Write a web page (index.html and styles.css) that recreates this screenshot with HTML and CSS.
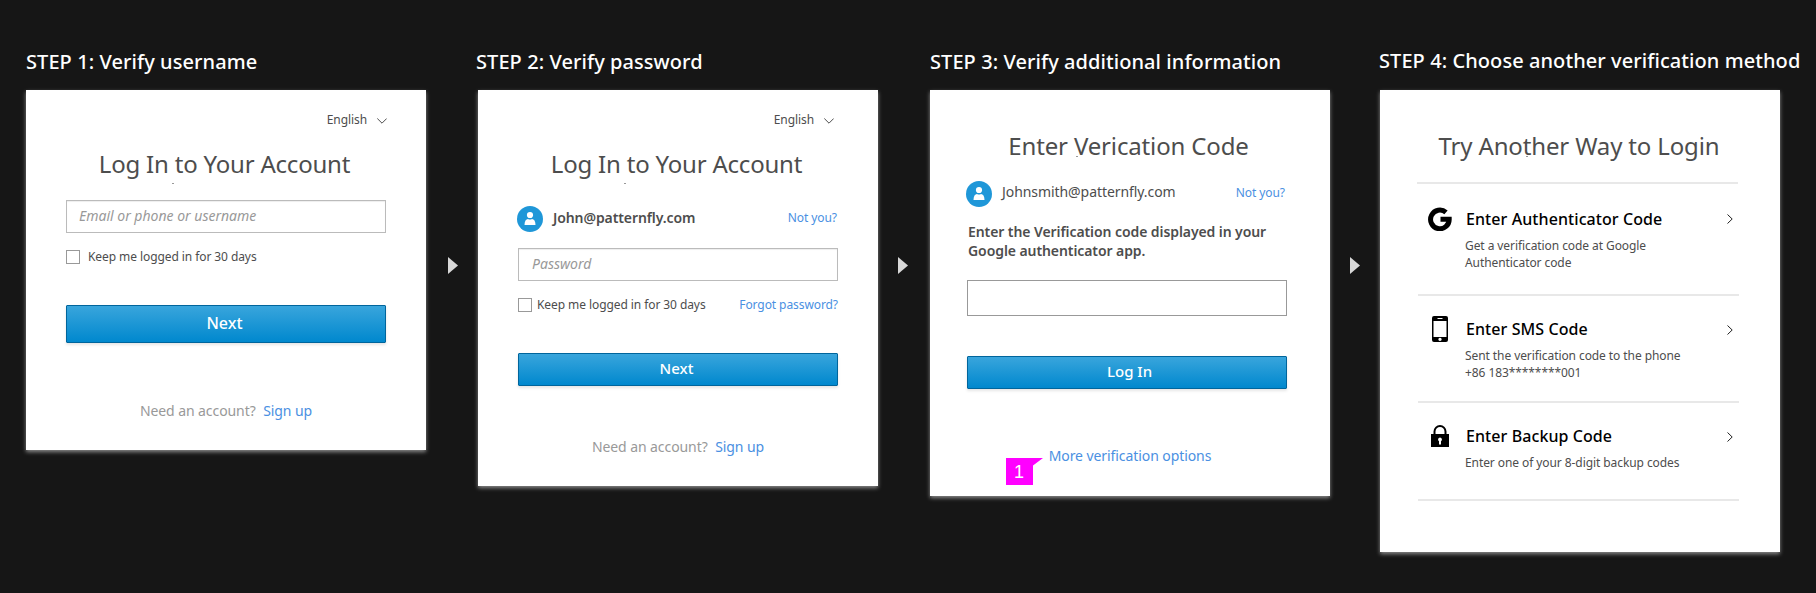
FILE: index.html
```
<!DOCTYPE html>
<html lang="en">
<head>
<meta charset="utf-8">
<title>Login flow</title>
<link rel="stylesheet" href="styles.css">
</head>
<body>
<main class="flow">
  <section class="step">
    <h2 class="step-title t1"><span>STEP 1: Verify username</span></h2>
    <div class="card card-1">
      <div class="language"><span>English</span><svg class="chevron-down" viewBox="0 0 10 6"><path d="M.3 .5 5 5.200 9.700 .5"/></svg></div>
      <h1 class="heading">Log In to Your Account</h1>
      <div class="field"><span>Email or phone or username</span></div>
      <div class="options"><i class="box"></i><span class="keep">Keep me logged in for 30 days</span></div>
      <div class="button">Next</div>
      <p class="footer">Need an account? <a class="signup">Sign up</a></p>
    </div>
  </section>
  <svg class="arrow" viewBox="0 0 10 17"><path d="M0 0 10 8.500 0 17z"/></svg>
  <section class="step">
    <h2 class="step-title t2"><span>STEP 2: Verify password</span></h2>
    <div class="card card-2">
      <div class="language"><span>English</span><svg class="chevron-down" viewBox="0 0 10 6"><path d="M.3 .5 5 5.200 9.700 .5"/></svg></div>
      <h1 class="heading">Log In to Your Account</h1>
      <div class="user">
        <svg class="avatar" viewBox="0 0 26 26"><circle class="disc" cx="13" cy="13" r="13"/><circle cx="13" cy="9" r="3.100"/><path d="M7.500 19c0-4 1.500-6 3.500-6q2 1 4 0c2 0 3.500 2 3.500 6z"/></svg>
        <span class="user-name">John@patternfly.com</span><a class="not-you">Not you?</a>
      </div>
      <div class="field"><span>Password</span></div>
      <div class="options"><i class="box"></i><span class="keep">Keep me logged in for 30 days</span><a class="forgot">Forgot password?</a></div>
      <div class="button">Next</div>
      <p class="footer">Need an account? <a class="signup">Sign up</a></p>
    </div>
  </section>
  <svg class="arrow" viewBox="0 0 10 17"><path d="M0 0 10 8.500 0 17z"/></svg>
  <section class="step">
    <h2 class="step-title t3"><span>STEP 3: Verify additional information</span></h2>
    <div class="card card-3">
      <h1 class="heading">Enter Verication Code</h1>
      <div class="user">
        <svg class="avatar" viewBox="0 0 26 26"><circle class="disc" cx="13" cy="13" r="13"/><circle cx="13" cy="9" r="3.100"/><path d="M7.500 19c0-4 1.500-6 3.500-6q2 1 4 0c2 0 3.500 2 3.500 6z"/></svg>
        <span class="user-name">Johnsmith@patternfly.com</span><a class="not-you">Not you?</a>
      </div>
      <p class="message">Enter the Verification code displayed in your<br>Google authenticator app.</p>
      <div class="field"></div>
      <div class="button">Log In</div>
      <p class="footer"><a>More verification options</a></p>
      <div class="marker"><svg viewBox="0 0 37 27"><path d="M0 0H37L27 7.500V27H0z"/></svg><span>1</span></div>
    </div>
  </section>
  <svg class="arrow" viewBox="0 0 10 17"><path d="M0 0 10 8.500 0 17z"/></svg>
  <section class="step">
    <h2 class="step-title t4"><span>STEP 4: Choose another verification method</span></h2>
    <div class="card card-4">
      <h1 class="heading">Try Another Way to Login</h1>
      <ul class="methods">
        <li class="method google">
          <div class="icon"><svg width="24" height="24" viewBox="0 0 24 24"><path class="g-arc" d="M18 5.400A9.300 9.300 0 1 0 21.200 12.300H12.500"/></svg></div>
          <div class="copy"><h3>Enter Authenticator Code</h3><p>Get a verification code at Google<br>Authenticator code</p></div>
          <svg class="chevron-right" viewBox="0 0 6 10"><path d="M.5 .5 5.200 5 .5 9.500"/></svg>
        </li>
        <li class="method sms">
          <div class="icon"><svg width="16" height="26" viewBox="0 0 16 26"><path fill-rule="evenodd" d="M2 0H14Q16 0 16 2V24Q16 26 14 26H2Q0 26 0 24V2Q0 0 2 0ZM1.500 5V21H14.500V5ZM5.500 2V3H10.500V2ZM8 21.800a1.600 1.600 0 1 0 .01 0z"/></svg></div>
          <div class="copy"><h3>Enter SMS Code</h3><p>Sent the verification code to the phone<br>+86 183********001</p></div>
          <svg class="chevron-right" viewBox="0 0 6 10"><path d="M.5 .5 5.200 5 .5 9.500"/></svg>
        </li>
        <li class="method backup">
          <div class="icon"><svg width="18" height="22" viewBox="0 0 18 22"><path class="shackle" d="M3.500 10V6.500a5.500 5.500 0 0 1 11 0V10"/><path fill-rule="evenodd" d="M0 9H18V22H0ZM9 12.500a2 2 0 0 0-1 3.700V19.500H10V16.200a2 2 0 0 0-1-3.700z"/></svg></div>
          <div class="copy"><h3>Enter Backup Code</h3><p>Enter one of your 8-digit backup codes</p></div>
          <svg class="chevron-right" viewBox="0 0 6 10"><path d="M.5 .5 5.200 5 .5 9.500"/></svg>
        </li>
      </ul>
    </div>
  </section>
</main>
</body>
</html>
```
FILE: styles.css
```
* { box-sizing: border-box; margin: 0; padding: 0; }
body {
  height: 593px;
  overflow: hidden;
  background: #161616;
  color: #4d4d4d;
  font-family: "Noto Sans", "Open Sans", sans-serif;
  font-size: 12px;
  line-height: 16px;
  letter-spacing: -.08px;
}
svg { display: block; flex: none; }
a { color: #4a90e2; }
.flow { display: flex; align-items: flex-start; padding: 47px 0 0 26px; }
.step { width: 400px; flex: none; }
.step-title {
  height: 30px;
  margin-bottom: 13px;
  color: #fff;
  font-size: 20px;
  font-weight: 500;
  line-height: 30px;
  letter-spacing: .07px;
  white-space: nowrap;
}
.t2 { margin-left: -2px; }
.t4 { margin: -1px 0 14px -1px; }
.arrow { width: 10px; height: 17px; margin: 210px 20px 0 22px; fill: #d8d8d8; }
.arrow:nth-of-type(2) { margin-left: 20px; margin-right: 22px; }
.arrow:nth-of-type(3) { margin-right: 20px; margin-left: 20px; }
.card {
  position: relative;
  padding: 22px 40px 0;
  background: #fff;
  box-shadow: 0 2px 4px rgba(255, 255, 255, .5);
}
.card-1 { height: 360px; }
.card-2 { height: 396px; }
.card-3 { height: 406px; padding: 40px 43px 0 37px; }
.card-4 { height: 462px; padding: 40px 42px 0 37px; }

.language { display: flex; justify-content: flex-end; align-items: center; gap: 10px; height: 16px; margin-right: -1px; }
.card-2 .language { margin-right: 4px; }
.chevron-down { width: 10px; height: 6px; margin-top: 2px; fill: none; stroke: #4d4d4d; }
.heading {
  margin-top: 20px;
  font-size: 24px;
  font-weight: 400;
  line-height: 32px;
  letter-spacing: -.2px;
  text-align: center;
  white-space: nowrap;
}
.card-1 .heading, .card-2 .heading { padding-right: 3px; }
.card-3 .heading, .card-4 .heading { margin-top: 0; padding-left: 3px; letter-spacing: -.15px; }
.heading::after {
  content: "";
  position: absolute;
  left: 146px;
  top: 93px;
  width: 2px;
  height: 1px;
  background: #999;
}
.card-3 .heading::after, .card-4 .heading::after { top: 66px; }

.field {
  height: 33px;
  margin-top: 20px;
  padding-left: 12px;
  border: 1px solid #bbb;
  box-shadow: inset 0 1px 1px rgba(0, 0, 0, .07);
  color: #999;
  font-size: 14px;
  font-style: italic;
  line-height: 30px;
  letter-spacing: 0;
}
.card-2 .field { margin-top: 16px; padding-left: 13px; }
.card-3 .field { height: 36px; margin-top: 20px; border-color: #999; box-shadow: none; }
.options { display: flex; align-items: center; height: 16px; margin-top: 16px; }
.box { width: 14px; height: 14px; border: 1px solid #999; }
.keep { margin-left: 8px; }
.card-2 .keep { margin-left: 5px; }
.forgot { margin: 0 0 0 auto; }
.button {
  height: 38px;
  margin-top: 40px;
  padding-right: 3px;
  border: 1px solid #00659c;
  border-radius: 1px;
  background: linear-gradient(#39a5dc, #0088ce);
  box-shadow: 0 2px 3px rgba(3, 3, 3, .1);
  color: #fff;
  font-size: 16px;
  font-weight: 500;
  line-height: 35px;
  letter-spacing: 0;
  text-align: center;
}
.card-2 .button, .card-3 .button { height: 33px; font-size: 15px; line-height: 28px; }
.card-3 .button { padding: 0 0 0 5px; }
.footer { margin-top: 58px; color: #999; font-size: 14px; line-height: 20px; text-align: center; }
.card-2 .footer { margin-top: 51px; }
.card-3 .footer { margin-top: 57px; padding-left: 6px; }
.signup { margin-left: 4px; }

.user { display: flex; align-items: flex-start; margin: 26px 0 0 -1px; }
.card-3 .user { margin: 19px 2px 0 -1px; }
.avatar { width: 26px; height: 26px; fill: #fff; }
.disc { fill: #1f97d8; }
.user-name { margin: 2px 0 0 10px; font-size: 14px; font-weight: 600; line-height: 20px; letter-spacing: -.1px; }
.card-3 .user-name { margin: 1px 0 0 10px; font-weight: 400; letter-spacing: -.07px; }
.not-you { margin: 4px 1px 0 auto; }
.card-3 .not-you { margin: 4px 0 0 auto; }
.message { margin: 15px 0 0 1px; font-size: 14px; font-weight: 600; line-height: 19px; white-space: nowrap; }
.marker { position: absolute; left: 76px; top: 368px; width: 37px; height: 27px; }
.marker svg { width: 37px; height: 27px; fill: #f0f; }
.marker span { position: absolute; left: 8px; top: 4px; color: #fff; font-family: "Liberation Sans", sans-serif; font-size: 18px; line-height: 20px; }

.methods { margin-top: 20px; list-style: none; }
.method { display: flex; height: 112px; border-top: 2px solid #e8e8e8; }
.sms { height: 107px; }
.backup { height: 100px; border-bottom: 2px solid #e8e8e8; }
.sms, .backup { margin: 0 -1px 0 1px; }
.icon { display: flex; justify-content: center; width: 24px; margin: 23px 0 0 11px; }
.g-arc { fill: none; stroke: #000; stroke-width: 5; }
.sms .icon { margin: 20px 0 0 10px; }
.backup .icon { margin: 22px 0 0 10px; }
.shackle { fill: none; stroke: #000; stroke-width: 2; }
.copy { flex: 1; margin: 24px 0 0 13px; white-space: nowrap; }
.sms .copy, .backup .copy { margin-top: 22px; }
.copy h3 { margin-left: 1px; color: #000; font-size: 16px; font-weight: 500; line-height: 22px; letter-spacing: .08px; }
.copy p { margin-top: 7px; line-height: 17px; }
.chevron-right { width: 6px; height: 10px; margin: 30px 5px 0 0; fill: none; stroke: #222; }
.sms .chevron-right, .backup .chevron-right { margin: 29px 6px 0 0; }
```
